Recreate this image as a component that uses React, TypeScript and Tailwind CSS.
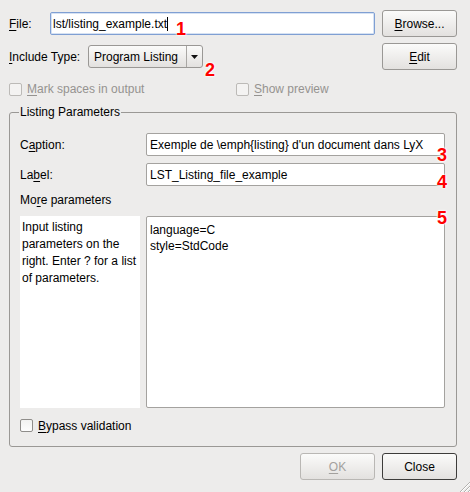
import type { ReactNode } from 'react'

function Mn({ children }: { children: ReactNode }) {
  return <span className="underline underline-offset-[2px] decoration-1">{children}</span>
}

function Btn({ children, variant = 'normal' }: { children: ReactNode; variant?: 'normal' | 'default' | 'disabled' }) {
  const tone =
    variant === 'default'
      ? 'border-[#3d3c3a] text-black'
      : variant === 'disabled'
        ? 'border-[#b9b7b4] text-[#a3a19e]'
        : 'border-[#9a9895] text-black'
  return (
    <button
      type="button"
      className={`h-[27px] w-[75px] shrink-0 rounded-[3px] border bg-linear-to-b from-[#fbfbfa] to-[#e3e1df] text-[12px] ${tone}`}
    >
      {children}
    </button>
  )
}

function Check({ disabled = false }: { disabled?: boolean }) {
  return (
    <span
      className={
        disabled
          ? 'block w-[13px] h-[13px] shrink-0 rounded-[2px] border border-[#bcbab7] bg-[#f4f3f2]'
          : 'block w-[13px] h-[13px] shrink-0 rounded-[2px] border border-[#8f8d8a] bg-linear-to-b from-[#f2f2f1] to-[#fdfdfd]'
      }
    />
  )
}

function Field({ children }: { children: ReactNode }) {
  return (
    <div className="h-[23px] flex items-center rounded-[2px] border border-[#a4a29f] bg-white px-[3px] whitespace-nowrap overflow-hidden">
      {children}
    </div>
  )
}

function Num({ n, className }: { n: string; className: string }) {
  return (
    <span
      className={`absolute text-[18px] leading-[18px] font-bold text-[#ff0000] [text-shadow:0_0_2px_#fff,0_0_2px_#fff,0_0_3px_#fff] ${className}`}
    >
      {n}
    </span>
  )
}

export default function App() {
  return (
    <div className="relative w-[470px] h-[492px] overflow-hidden bg-[#edeceb] pl-[9px] pr-[13px] pt-[10px] text-[12px] leading-[14px] text-black font-['Liberation_Sans',Arial,sans-serif] flex flex-col">
      {/* file row */}
      <div className="flex items-center h-[27px]">
        <span className="w-[41px] shrink-0">
          <Mn>F</Mn>ile:
        </span>
        <div className="flex-1 h-[23px] flex items-center rounded-[2px] border border-[#7f9fd3] bg-white px-[2px] shadow-[inset_0_0_0_1px_#d6e2f3]">
          <span>lst/listing_example.txt</span>
          <span className="block w-px h-[14px] bg-black" />
        </div>
        <div className="ml-[7px]">
          <Btn>
            <Mn>B</Mn>rowse...
          </Btn>
        </div>
      </div>

      {/* include type row */}
      <div className="flex items-center h-[27px] mt-[6px]">
        <span className="w-[79px] shrink-0">
          <Mn>I</Mn>nclude Type:
        </span>
        <div className="w-[115px] h-[23px] flex rounded-[3px] border border-[#9a9895] bg-linear-to-b from-[#fbfbfa] to-[#e3e1df]">
          <span className="flex-1 flex items-center pl-[5px]">Program Listing</span>
          <span className="w-[16px] flex items-center justify-center border-l border-[#a9a7a4]">
            <svg width="7" height="4" viewBox="0 0 7 4">
              <path d="M0 0h7L3.5 4z" fill="#111" />
            </svg>
          </span>
        </div>
        <div className="flex-1" />
        <Btn>
          <Mn>E</Mn>dit
        </Btn>
      </div>

      {/* options row */}
      <div className="flex items-center h-[14px] mt-[12px] text-[#959390]">
        <div className="w-[227px] flex items-center gap-[5px]">
          <Check disabled />
          <span>
            <Mn>M</Mn>ark spaces in output
          </span>
        </div>
        <div className="flex items-center gap-[5px]">
          <Check disabled />
          <span>
            <Mn>S</Mn>how preview
          </span>
        </div>
      </div>

      {/* group */}
      <fieldset className="mt-[9px] rounded-[3px] border border-[#9a9895] pl-[10px] pr-[11px] pt-[14px] pb-[14px]">
        <legend className="-ml-[1px] px-[1px] leading-[14px]">Listing Parameters</legend>
        <div className="grid grid-cols-[126px_1fr] gap-y-[7px] items-center">
          <span>
            C<Mn>a</Mn>ption:
          </span>
          <Field>Exemple de \emph{'{listing}'} d'un document dans LyX</Field>
          <span>
            La<Mn>b</Mn>el:
          </span>
          <Field>LST_Listing_file_example</Field>
        </div>
        <div className="mt-[7px] h-[14px]">
          Mo<Mn>r</Mn>e parameters
        </div>
        <div className="mt-[9px] flex h-[192px] gap-[6px]">
          <div className="w-[120px] shrink-0 bg-white px-[2px] pt-[3px] leading-[17px]">
            Input listing
            <br />
            parameters on the
            <br />
            right. Enter ? for a list
            <br />
            of parameters.
          </div>
          <div className="flex-1 rounded-[2px] border border-[#a4a29f] bg-white px-[3px] pt-[5px] leading-[16px]">
            language=C
            <br />
            style=StdCode
          </div>
        </div>
        <div className="mt-[11px] flex items-center gap-[5px] h-[13px]">
          <Check />
          <span>
            <Mn>B</Mn>ypass validation
          </span>
        </div>
      </fieldset>

      {/* bottom buttons */}
      <div className="mt-[6px] flex justify-end gap-[7px]">
        <Btn variant="disabled">
          <Mn>O</Mn>K
        </Btn>
        <Btn variant="default">Close</Btn>
      </div>

      {/* size grip */}
      <svg className="absolute right-0 bottom-0" width="12" height="12" viewBox="0 0 12 12">
        <path d="M12 2L2 12M12 6L6 12M12 10L10 12" stroke="#b3b1ae" strokeWidth="1" />
        <path d="M12 3L3 12M12 7L7 12M12 11L11 12" stroke="#ffffff" strokeWidth="1" />
      </svg>

      {/* callouts */}
      <Num n="1" className="left-[176px] top-[20px]" />
      <Num n="2" className="left-[205px] top-[61px]" />
      <Num n="3" className="left-[437px] top-[146px]" />
      <Num n="4" className="left-[437px] top-[173px]" />
      <Num n="5" className="left-[437px] top-[209px]" />
    </div>
  )
}
